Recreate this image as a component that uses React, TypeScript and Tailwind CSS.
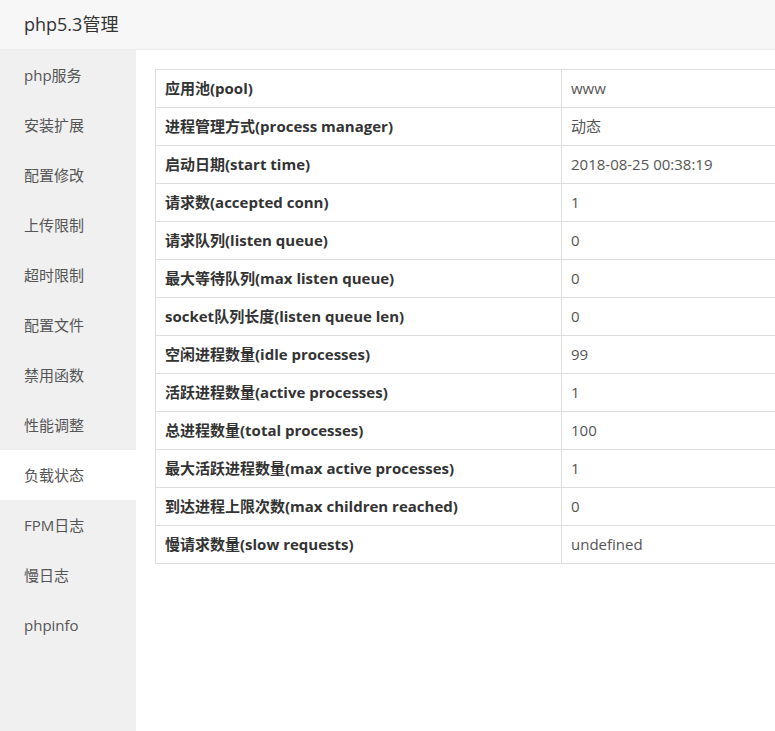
import React from 'react';

const MENU = [
  'php服务',
  '安装扩展',
  '配置修改',
  '上传限制',
  '超时限制',
  '配置文件',
  '禁用函数',
  '性能调整',
  '负载状态',
  'FPM日志',
  '慢日志',
  'phpinfo',
];

const ROWS: [string, string][] = [
  ['应用池(pool)', 'www'],
  ['进程管理方式(process manager)', '动态'],
  ['启动日期(start time)', '2018-08-25 00:38:19'],
  ['请求数(accepted conn)', '1'],
  ['请求队列(listen queue)', '0'],
  ['最大等待队列(max listen queue)', '0'],
  ['socket队列长度(listen queue len)', '0'],
  ['空闲进程数量(idle processes)', '99'],
  ['活跃进程数量(active processes)', '1'],
  ['总进程数量(total processes)', '100'],
  ['最大活跃进程数量(max active processes)', '1'],
  ['到达进程上限次数(max children reached)', '0'],
  ['慢请求数量(slow requests)', 'undefined'],
];

export default function App() {
  const active = '负载状态';
  return (
    <div className="w-full h-[731px] overflow-hidden bg-white flex flex-col font-['Open_Sans','Noto_Sans_CJK_SC',sans-serif]">
      {/* Title bar */}
      <div className="h-[50px] shrink-0 bg-[#f7f7f7] border-b border-[#ececec] flex items-center px-6">
        <span className="text-[18px] text-[#333]">php5.3管理</span>
      </div>

      <div className="flex flex-1 min-h-0">
        {/* Side menu */}
        <div className="w-[136px] shrink-0 bg-[#f0f0f0]">
          {MENU.map(item => (
            <div
              key={item}
              className={
                item === active
                  ? 'h-[50px] flex items-center px-6 text-[15px] text-[#555] bg-white'
                  : 'h-[50px] flex items-center px-6 text-[15px] text-[#555]'
              }
            >
              {item}
            </div>
          ))}
        </div>

        {/* Status table */}
        <div className="flex-1 pt-[19px] pl-[19px] overflow-hidden">
          <table className="w-[680px] border-collapse text-[15px] text-[#333]">
            <tbody>
              {ROWS.map(([k, v]) => (
                <tr key={k} className="h-[38px]">
                  <td className="w-[406px] border border-[#ddd] px-[9px] font-bold">{k}</td>
                  <td className="border border-[#ddd] px-[9px] text-[#555]">{v}</td>
                </tr>
              ))}
            </tbody>
          </table>
        </div>
      </div>
    </div>
  );
}
